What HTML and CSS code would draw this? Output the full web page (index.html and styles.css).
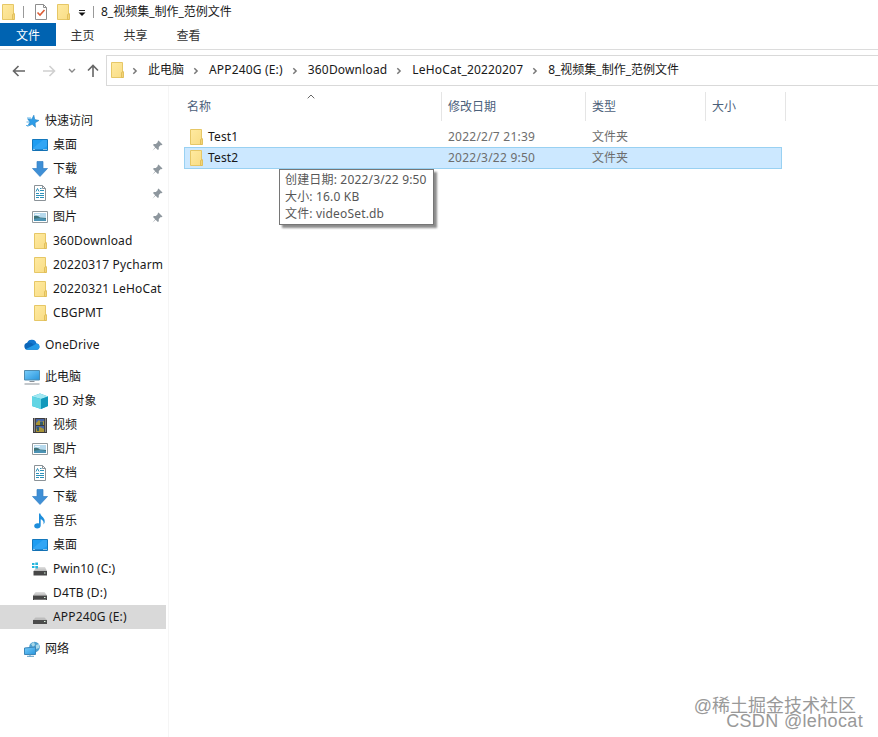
FILE: index.html
```html
<!DOCTYPE html>
<html lang="zh-CN">
<head>
    <meta charset="UTF-8">
    <meta name="viewport" content="width=device-width, initial-scale=1.0">
    <title>8_视频集_制作_范例文件</title>
    <link rel="stylesheet" href="styles.css">
</head>
<body>
    <!-- shared icons -->
    <svg class="sprite" width="0" height="0">
        <defs>
            <linearGradient id="g-folder" x1="0" x2="1" y1="0" y2="1"><stop offset="0" stop-color="#ffeaa0"/><stop offset="1" stop-color="#f8dc85"/></linearGradient>
            <linearGradient id="g-blue" x1="0" x2="1" y1="0" y2="1"><stop offset="0" stop-color="#79cdfb"/><stop offset="1" stop-color="#2795dc"/></linearGradient>
            <linearGradient id="g-drive" x1="0" x2="0" y1="0" y2="1"><stop offset="0" stop-color="#e0e0e0"/><stop offset="1" stop-color="#b8b8b8"/></linearGradient>
        </defs>
        <symbol id="folder" viewBox="0 0 16 16">
            <path d="M2.500.5h11v9.500h.8v5.500H2.500z" fill="url(#g-folder)" stroke="#e6c766"/>
            <path d="M12.500 15.500v-5l1.800-1v6z" fill="#f8dc80" stroke="#dcb850" stroke-width=".8"/>
        </symbol>
        <symbol id="star" viewBox="0 0 16 16">
            <path d="M9 2l1.500 4.200 4.300.3-3.500 2.800 1 4.400-3.600-2.400-4.300 2.500 1.700-4.500-2.600-2.800 4.100-.3z" fill="#2e9de8" stroke="#2583c5" stroke-width=".6" transform="rotate(8 8 8)"/>
            <path d="M3 5h4M2.500 9h3M2 12.500h3" stroke="#65b6ea"/>
        </symbol>
        <symbol id="desktop" viewBox="0 0 16 16">
            <path d="M.5 2.500h15v11H.5z" fill="#1e9df2" stroke="#1478bd"/>
            <path d="M1 11L11 3h4v6L9 13H1z" fill="#45b0f8" opacity=".5"/>
            <path d="M1 13h14" stroke="#1268aa"/><path d="M1.500 12.500h1m9 0h1m1 0h1" stroke="#fff"/>
        </symbol>
        <symbol id="download" viewBox="0 0 16 16">
            <path d="M5 .5h6v7h4.500L8 15.500.5 7.500H5z" fill="#3e8fd6" stroke="#347fc3" stroke-width=".7"/>
        </symbol>
        <symbol id="document" viewBox="0 0 16 16">
            <path d="M2.500.5h8l3 3v12h-11z" fill="#fff" stroke="#8b9297"/>
            <path d="M10.500.5v3h3" fill="none" stroke="#8b9297"/>
            <path d="M4 6.500l1.500-3 1.500 3M8 3.500h1.500M8 5.500h4M4 8.500h3M8 8.500h4M4 10.500h8M4 12.500h3M8 12.500h4" fill="none" stroke="#2c91b9"/>
        </symbol>
        <symbol id="picture" viewBox="0 0 16 16">
            <path d="M.5 2.500h15v11H.5z" fill="#fff" stroke="#929a9e"/>
            <path d="M2 4h12v8H2z" fill="#b6d9ed"/>
            <path d="M2 7q4-1 6 1.500l6 .5v3H2z" fill="#3f7378"/><path d="M2 10q6-2 12 0v2H2z" fill="#4c93b4"/>
            <path d="M3 5h5v1H3z" fill="#edf8fd"/>
        </symbol>
        <symbol id="cloud" viewBox="0 0 16 16">
            <path d="M3.600 12.800a3.600 3.600 0 01-.4-7.100A4.900 4.900 0 0112.200 6.500a3.200 3.200 0 01.8 6.300z" fill="#0b66b9"/>
            <path d="M3.200 5.700Q7 5 10 8l2.500-1.500A4.900 4.900 0 003.200 5.700z" fill="#1277cf"/>
            <path d="M1.500 12.200L10 8l2.500-1.500A3.200 3.200 0 0113 12.800H3.600z" fill="#259be7"/>
        </symbol>
        <symbol id="pc" viewBox="0 0 16 16">
            <path d="M.5 1.500h15v9.500H.5z" fill="url(#g-blue)" stroke="#508caf"/>
            <path d="M5.500 12.500h5M.5 15h15" stroke="#899198"/>
        </symbol>
        <symbol id="cube" viewBox="0 0 16 16">
            <path d="M0 3.500L8 .5l8 3v9.500l-7 3L0 13z" fill="#25b3d0"/>
            <path d="M0 3.500l8-3 8 3-7 2.500z" fill="#a2e8f2"/><path d="M0 3.500L9 6v10l-9-3z" fill="#62d5e4"/><path d="M9 6l7-2.500V13l-7 3z" fill="#1299bb"/>
        </symbol>
        <symbol id="video" viewBox="0 0 16 16">
            <path d="M1 1h14v15H1z" fill="#3d3b3b"/>
            <path d="M2.500 1.500v14M13.500 1.500v14" stroke="#ddd" stroke-width="1.200" stroke-dasharray="1 1"/>
            <path d="M4 2h8v6H4zM4 9h8v6H4z" fill="#4665a7"/>
            <path d="M4 6l3-3 2 2 3-1v4H4zM4 12l4-2 4 2v3H4z" fill="#a89437"/><path d="M8 5h3v3H8zM5 10h2v4H5z" fill="#345b68"/>
        </symbol>
        <symbol id="music" viewBox="0 0 16 16">
            <path d="M7 .5h1.300c.3 3 5.500 4.200 4.300 9.200l-1.200 1.800c.8-3-.7-4.500-2.700-5.200v6.200c0 2-1.500 3-3.500 3-1.800 0-3-1-3-2.500 0-2 2.500-3.200 4.800-2.400z" fill="#1e8edb"/>
        </symbol>
        <symbol id="drive" viewBox="0 0 16 16">
            <path d="M3.500 7h9L15 10.500H1z" fill="url(#g-drive)"/>
            <path d="M1 10.500h14V15H1z" fill="#474747"/><path d="M2 14.500h12" stroke="#777"/>
            <path d="M12 12.500h1.500" stroke="#d9f4dd"/>
        </symbol>
        <symbol id="drive-flat" viewBox="0 0 16 16">
            <path d="M3.500 8.500h9L15 11H1z" fill="#bdbdbd"/>
            <path d="M1 11h14v4H1z" fill="#4c4c4c"/><path d="M12 12.500h1.500" stroke="#d9f4dd"/>
        </symbol>
        <symbol id="drive-win" viewBox="0 0 16 16">
            <path d="M5 6h8l2 4H1.500z" fill="url(#g-drive)"/>
            <path d="M1.500 10H15v4.500H1.500z" fill="#474747"/><path d="M12 12h1.500" stroke="#d9f4dd"/>
            <path d="M0 2h2.500v2H0zM3.300 1.500H6V4H3.300zM0 5h2.500v2H0zM3.300 5H6v2.500H3.300z" fill="#25b5dc"/>
        </symbol>
        <symbol id="network" viewBox="0 0 16 16">
            <circle cx="10.500" cy="6" r="5.300" fill="#4c9fce"/>
            <path d="M7 3l3-2 1 3-2 2zM12 4l3-1v4l-3 1z" fill="#a8d8e9"/>
            <path d="M.5 7L11.500 6v7.500L.5 13.500z" fill="url(#g-blue)" stroke="#3c86b8"/>
            <path d="M6 13.500v2M3 15.300h7" stroke="#5b9cc2"/>
        </symbol>
        <symbol id="pin" viewBox="0 0 11 11">
            <path d="M6.500.5l4 4-1 .8-.7-.2-2 2v2.100l-.9.8L3.600 7.800.4 10.700l2.800-3.500L1 5l.9-.9h2l2-2-.2-.8z" fill="#8e979e"/>
        </symbol>
        <symbol id="chevron" viewBox="0 0 6 8">
            <path d="M1.300 1.200l2.800 2.800-2.800 2.800" fill="none" stroke="#777" stroke-width="1.500"/>
        </symbol>
    </svg>

    <header>
        <div class="titlebar">
            <svg class="icon"><use href="#folder"/></svg>
            <span class="bar bar-first"></span>
            <svg class="icon check" viewBox="0 0 16 16">
                <path d="M2.500.5h8l3 3v12h-11z" fill="#fff" stroke="#8e8e8e"/><path d="M10.500.5v3h3" fill="none" stroke="#8e8e8e"/>
                <path d="M4.500 8.500l2.500 2.500 4.500-5" fill="none" stroke="#dc5c35" stroke-width="1.600"/>
            </svg>
            <svg class="icon quick-folder"><use href="#folder"/></svg>
            <svg class="more" width="8" height="8" viewBox="0 0 8 8"><path d="M1 1.500h6" stroke="#222"/><path d="M.5 3.500h7L4 7z" fill="#111"/></svg>
            <span class="bar"></span>
            <span class="title">8_视频集_制作_范例文件</span>
        </div>
        <nav class="tabs">
            <span class="tab active">文件</span>
            <span class="tab">主页</span>
            <span class="tab">共享</span>
            <span class="tab">查看</span>
        </nav>
    </header>

    <div class="addressbar">
        <div class="nav-buttons">
            <svg width="14" height="12" viewBox="0 0 14 12"><path d="M13 6H1.500M6.500 1l-5 5 5 5" fill="none" stroke="#666" stroke-width="1.600"/></svg>
            <svg class="forward" width="14" height="12" viewBox="0 0 14 12"><path d="M1 6h11.500M7.500 1l5 5-5 5" fill="none" stroke="#d0d0d0" stroke-width="1.600"/></svg>
            <svg class="recent" width="8" height="6" viewBox="0 0 8 6"><path d="M1 1l3 3 3-3" fill="none" stroke="#888" stroke-width="1.400"/></svg>
            <svg class="up" width="12" height="14" viewBox="0 0 12 14"><path d="M6 13V1.500M1 6.500l5-5 5 5" fill="none" stroke="#666" stroke-width="1.600"/></svg>
        </div>
        <div class="path">
            <svg class="icon"><use href="#folder"/></svg>
            <svg class="chevron first"><use href="#chevron"/></svg>
            <span>此电脑</span>
            <svg class="chevron"><use href="#chevron"/></svg>
            <span class="en">APP240G (E:)</span>
            <svg class="chevron"><use href="#chevron"/></svg>
            <span class="en">360Download</span>
            <svg class="chevron"><use href="#chevron"/></svg>
            <span class="en">LeHoCat_20220207</span>
            <svg class="chevron"><use href="#chevron"/></svg>
            <span>8_视频集_制作_范例文件</span>
        </div>
    </div>

    <div class="main">
        <aside class="sidebar">
            <div class="group">
                <div class="item root"><svg class="icon"><use href="#star"/></svg>快速访问</div>
                <div class="item"><svg class="icon"><use href="#desktop"/></svg>桌面<svg class="pin"><use href="#pin"/></svg></div>
                <div class="item"><svg class="icon"><use href="#download"/></svg>下载<svg class="pin"><use href="#pin"/></svg></div>
                <div class="item"><svg class="icon"><use href="#document"/></svg>文档<svg class="pin"><use href="#pin"/></svg></div>
                <div class="item"><svg class="icon"><use href="#picture"/></svg>图片<svg class="pin"><use href="#pin"/></svg></div>
                <div class="item en"><svg class="icon"><use href="#folder"/></svg>360Download</div>
                <div class="item en"><svg class="icon"><use href="#folder"/></svg>20220317 Pycharm</div>
                <div class="item en"><svg class="icon"><use href="#folder"/></svg>20220321 LeHoCat</div>
                <div class="item en"><svg class="icon"><use href="#folder"/></svg>CBGPMT</div>
            </div>
            <div class="group">
                <div class="item root en"><svg class="icon"><use href="#cloud"/></svg>OneDrive</div>
            </div>
            <div class="group">
                <div class="item root"><svg class="icon"><use href="#pc"/></svg>此电脑</div>
                <div class="item en"><svg class="icon"><use href="#cube"/></svg>3D 对象</div>
                <div class="item"><svg class="icon"><use href="#video"/></svg>视频</div>
                <div class="item"><svg class="icon"><use href="#picture"/></svg>图片</div>
                <div class="item"><svg class="icon"><use href="#document"/></svg>文档</div>
                <div class="item"><svg class="icon"><use href="#download"/></svg>下载</div>
                <div class="item"><svg class="icon"><use href="#music"/></svg>音乐</div>
                <div class="item"><svg class="icon"><use href="#desktop"/></svg>桌面</div>
                <div class="item"><svg class="icon"><use href="#drive-win"/></svg>Pwin10 (C:)</div>
                <div class="item en"><svg class="icon"><use href="#drive"/></svg>D4TB (D:)</div>
                <div class="item selected en"><svg class="icon"><use href="#drive-flat"/></svg>APP240G (E:)</div>
            </div>
            <div class="group">
                <div class="item root"><svg class="icon"><use href="#network"/></svg>网络</div>
            </div>
        </aside>

        <section class="files">
            <div class="row head">
                <span class="name">名称<svg class="sort" width="8" height="5" viewBox="0 0 8 5"><path d="M.7 4.300L4 1l3.300 3.300" fill="none" stroke="#666"/></svg></span>
                <span>修改日期</span>
                <span>类型</span>
                <span>大小</span>
            </div>
            <div class="row">
                <span class="name en"><svg class="icon"><use href="#folder"/></svg>Test1</span>
                <span class="date">2022/2/7 21:39</span>
                <span>文件夹</span>
                <span></span>
            </div>
            <div class="row current">
                <span class="name en"><svg class="icon"><use href="#folder"/></svg>Test2</span>
                <span class="date">2022/3/22 9:50</span>
                <span>文件夹</span>
                <span></span>
                <div class="tooltip en">
                    <div>创建日期: 2022/3/22 9:50</div>
                    <div>大小: 16.0 KB</div>
                    <div>文件: videoSet.db</div>
                </div>
            </div>
        </section>
    </div>

    <div class="watermark juejin">@稀土掘金技术社区</div>
    <div class="watermark csdn">CSDN @lehocat</div>
</body>
</html>
```
FILE: styles.css
```css
* {
    box-sizing: border-box;
}
body {
    margin: 0;
    width: 878px;
    height: 737px;
    overflow: hidden;
    position: relative;
    background: #fff;
    color: #191919;
    font-family: "Noto Sans", "Noto Sans CJK SC", sans-serif;
    font-size: 12px;
    line-height: 16px;
    white-space: nowrap;
}
svg {
    display: block;
    flex: none;
}
.sprite {
    position: absolute;
}
.icon {
    width: 16px;
    height: 16px;
}
.en {
    letter-spacing: .17px;
}

/* title and ribbon */
header {
    height: 50px;
    border-bottom: 1px solid #dcdcdc;
}
.titlebar {
    display: flex;
    align-items: center;
    height: 23px;
}
.bar {
    width: 1px;
    height: 12px;
    background: #999;
}
.bar-first {
    margin-left: 7px;
}
.check {
    margin-left: 9px;
}
.quick-folder {
    margin-left: 6px;
}
.more {
    margin: 2px 7px 0 7px;
}
.title {
    margin-left: 7px;
}
.tabs {
    display: flex;
    height: 23px;
}
.tab {
    width: 53px;
    line-height: 25px;
    text-align: center;
    color: #333;
}
.tab.active {
    width: 56px;
    color: #fff;
    background: #0063b1;
}

/* address */
.addressbar {
    display: flex;
    height: 36px;
    padding-top: 5px;
}
.nav-buttons {
    display: flex;
    align-items: center;
    width: 106px;
    padding-left: 12px;
}
.forward {
    margin-left: 16px;
}
.recent {
    margin-left: 12px;
}
.up {
    margin-left: 11px;
}
.path {
    flex: 1;
    display: flex;
    align-items: center;
    height: 31px;
    padding: 0 0 1px 2px;
    border: 1px solid #d9d9d9;
    border-right: 0;
}
.chevron {
    width: 6px;
    height: 8px;
    margin: 1px 10px 0 9px;
}
.chevron.first {
    margin-left: 7px;
}

/* navigation pane */
.main {
    display: flex;
    height: 651px;
}
.sidebar {
    width: 169px;
    padding-top: 23px;
    border-right: 1px solid #f5f5f5;
}
.group {
    margin-bottom: 8px;
}
.item {
    display: flex;
    align-items: center;
    gap: 5px;
    width: 166px;
    height: 24px;
    padding-left: 32px;
}
.item.root {
    padding-left: 24px;
}
.item.selected {
    background: #d9d9d9;
}
.pin {
    width: 11px;
    height: 11px;
    margin-left: auto;
    margin-right: 3px;
}

/* file list */
.files {
    padding: 6px 0 0 15px;
}
.row {
    display: grid;
    grid-template-columns: 258px 144px 120px 76px;
    align-items: center;
    width: 598px;
    height: 21px;
    color: #6d6d6d;
    position: relative;
}
.row > span {
    padding-left: 6px;
}
.row .date {
    letter-spacing: .23px;
}
.row .name {
    display: flex;
    align-items: center;
    gap: 4px;
    padding-left: 4px;
    color: #191919;
}
.row.head {
    grid-template-columns: 258px 144px 120px 80px;
    width: 602px;
    height: 29px;
    margin-bottom: 5px;
}
.row.head > span {
    height: 29px;
    line-height: 29px;
    padding-left: 6px;
    border-right: 1px solid #e5e5e5;
    color: #4c607a;
}
.row.head .name {
    padding-left: 3px;
    color: #4c607a;
}
.sort {
    position: absolute;
    left: 123px;
    top: 2px;
}
.row.current {
    height: 22px;
    background: #cce8ff;
    outline: 1px solid #99d1f2;
    outline-offset: -1px;
}
.tooltip {
    position: absolute;
    left: 95px;
    top: 22px;
    width: 155px;
    height: 56px;
    padding: 1px 5px;
    line-height: 17px;
    color: #575757;
    background: #fff;
    border: 1px solid #767676;
    box-shadow: 3px 3px 2px rgba(0, 0, 0, .45);
}

.watermark {
    position: absolute;
    color: #999;
    font-family: "Liberation Sans", "Noto Sans CJK SC", sans-serif;
    font-size: 18px;
    line-height: 20px;
}
.juejin {
    right: 22px;
    top: 696px;
}
.csdn {
    right: 15px;
    top: 711px;
    letter-spacing: .35px;
}
```
